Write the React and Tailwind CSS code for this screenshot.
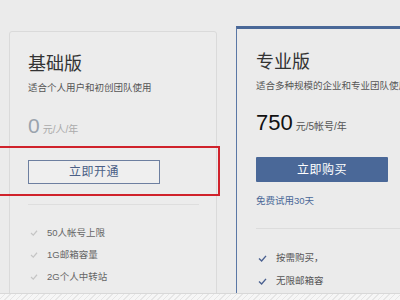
import React from 'react';

const font = { fontFamily: '"Liberation Sans", "Noto Sans CJK SC", sans-serif' };

function Check({ className }) {
  return (
    <svg viewBox="0 0 10 8" className={className} fill="none" stroke="currentColor" strokeWidth="1.6">
      <polyline points="1,4 4,6.8 9,1" />
    </svg>
  );
}

export default function App() {
  return (
    <div className="w-[400px] h-[300px] overflow-hidden bg-[#ebebeb] flex flex-col relative" style={font}>
      <div className="flex-1 flex items-start pl-[9px] overflow-hidden">
        {/* 基础版 */}
        <div className="w-[208px] mt-[31px] h-[300px] border border-[#dadada] rounded-[3px] bg-[#ececec] pl-[18px] pr-[17px] pt-[20px] shrink-0">
          <h2 className="text-[18px] leading-[24px] text-[#333]">基础版</h2>
          <p className="mt-[4px] text-[9.5px] leading-[16px] text-[#555]">适合个人用户和初创团队使用</p>
          <div className="mt-[17px] flex items-baseline h-[26px]">
            <span className="text-[21px] leading-[26px] text-[#9aa3ad]">0</span>
            <span className="ml-[3px] text-[10px] text-[#aaa]">元/人/年</span>
          </div>
          <button className="mt-[21px] w-[132px] h-[24px] border border-[#6d7fa0] bg-[#efefef] text-[12px] text-[#4b5f86] tracking-[0.5px]">
            立即开通
          </button>
          <div className="mt-[20px] h-px bg-[#dedede]" />
          <ul className="mt-[20px] flex flex-col gap-[6px] text-[9.5px] leading-[16px] text-[#666]">
            {['50人帐号上限', '1G邮箱容量', '2G个人中转站'].map((t) => (
              <li key={t} className="flex items-center">
                <Check className="w-[8px] h-[6px] ml-[2px] text-[#c5c5c5]" />
                <span className="ml-[9px]">{t}</span>
              </li>
            ))}
          </ul>
        </div>

        {/* 专业版 */}
        <div className="ml-[19px] mt-[26px] w-[170px] h-[300px] border-t-[3px] border-t-[#4a6898] border-l border-l-[#5a77a5] bg-[#ebebeb] pl-[19px] pt-[21px] shrink-0">
          <h2 className="text-[18px] leading-[24px] text-[#333]">专业版</h2>
          <p className="mt-[4px] text-[9.5px] leading-[16px] text-[#555] whitespace-nowrap">适合多种规模的企业和专业团队使用</p>
          <div className="mt-[16px] flex items-baseline h-[26px]">
            <span className="text-[22px] leading-[26px] text-[#111]">750</span>
            <span className="ml-[3px] text-[10px] text-[#555]">元/5帐号/年</span>
          </div>
          <button className="mt-[21px] w-[132px] h-[25px] bg-[#4a6898] text-[12px] text-white tracking-[0.5px] rounded-[1px]">
            立即购买
          </button>
          <p className="mt-[11px] text-[9.5px] leading-[16px] text-[#4a6898]">免费试用30天</p>
          <div className="mt-[19px] h-px bg-[#dcdcdc]" />
          <ul className="mt-[21px] flex flex-col gap-[7px] text-[9.5px] leading-[16px] text-[#555]">
            {['按需购买，', '无限邮箱容'].map((t) => (
              <li key={t} className="flex items-center">
                <Check className="w-[9px] h-[7px] ml-[2px] text-[#4a6090]" />
                <span className="ml-[9px]">{t}</span>
              </li>
            ))}
          </ul>
        </div>
      </div>

      {/* bottom strip */}
      <div className="h-[7px] shrink-0 border-t border-[#d8d8d8] bg-[repeating-linear-gradient(135deg,#f6f6f6_0_3px,#e6e6e6_3px_4px)]" />

      {/* red annotation box */}
      <div className="absolute left-[-4px] top-[146px] w-[224px] h-[50px] border-2 border-[#d0222b]" />
    </div>
  );
}
